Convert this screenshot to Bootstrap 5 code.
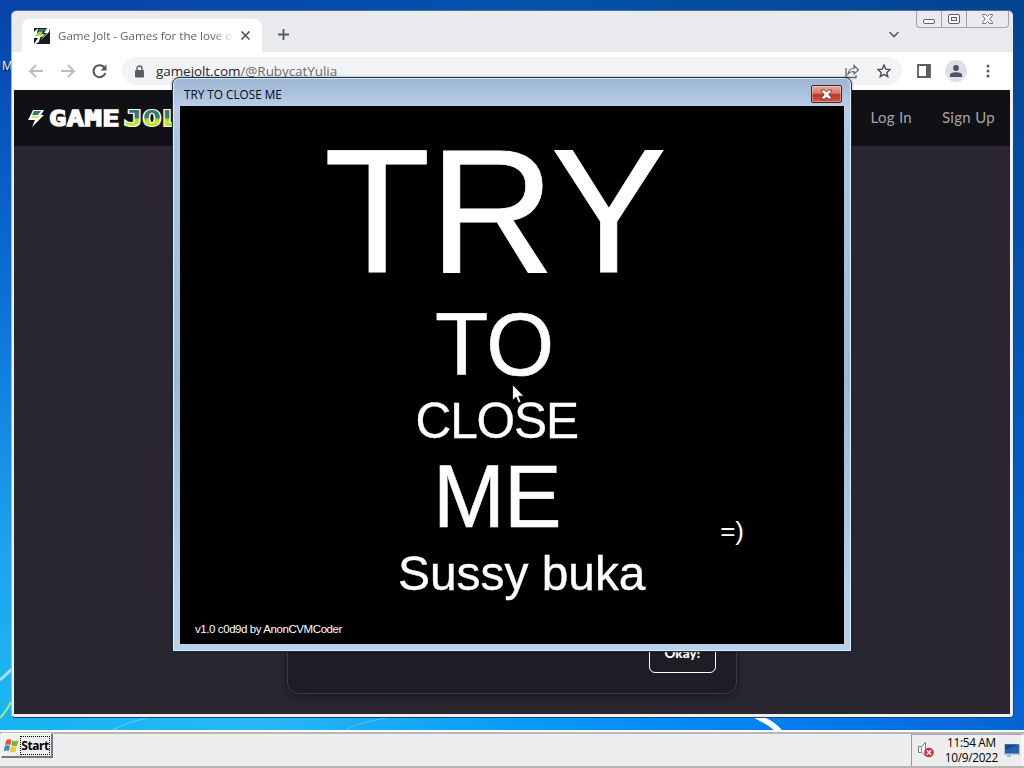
<!DOCTYPE html>
<html lang="en">
<head>
  <meta charset="UTF-8">
  <title>Desktop</title>
  <link href="https://cdn.jsdelivr.net/npm/bootstrap@5.3.0/dist/css/bootstrap.min.css" rel="stylesheet">
  <style>
    html, body {
      height: 100%;
      overflow: hidden;
      font-family: "Open Sans", "Noto Sans", sans-serif;
      font-size: 12px;
      line-height: 1;
    }

    svg {
      display: block;
      flex: none;
    }

    .desktop {
      width: 1024px;
      height: 768px;
      background: #0554b4;
    }

    .wallpaper {
      position: absolute;
      inset: 0;
    }

    .desk-icon {
      position: absolute;
      left: 2px;
      top: 60px;
      font-size: 12px;
      color: #fff;
      text-shadow: 1px 1px 1px #000;
    }

    /* Browser window */
    .browser {
      position: absolute;
      left: 11px;
      top: 10px;
      width: 1003px;
      height: 708px;
      padding: 0 3px 3px 2px;
      background: #f0f0f2;
      border: 1px solid #1d456b;
      border-top-color: #56708f;
      border-left-color: #9fb4cc;
      border-radius: 6px 6px 4px 4px;
      overflow: hidden;
    }

    .tab-strip {
      height: 41px;
      margin: 0 -3px 0 -2px;
      background: #e8eaed;
      padding-left: 10px;
    }

    .tab-item {
      width: 240px;
      height: 33px;
      margin-top: 8px;
      background: #fff;
      border-radius: 8px 8px 0 0;
      padding: 0 11px 0 11px;
    }

    .tab-title {
      width: 176px;
      margin-left: 8px;
      line-height: 16px;
      font-size: 11.6px;
      color: #5f6368;
      -webkit-mask-image: linear-gradient(90deg, #000 155px, transparent 176px);
    }

    .win-buttons {
      width: 93px;
      height: 17px;
      margin-right: 4px;
      border: 1px solid #a3a5a9;
      border-top: 0;
      border-radius: 0 0 4px 4px;
    }

    .win-buttons span + span {
      border-left: 1px solid #a3a5a9;
    }

    .toolbar {
      height: 38px;
      margin: 0 -3px 0 -2px;
      padding: 0 0 0 15px;
      background: #fff;
    }

    .omnibox {
      flex: none;
      width: 780px;
      height: 28px;
      margin-left: 14px;
      border-radius: 14px;
      background: #f1f3f4;
      padding: 0 11px 0 13px;
    }

    .url-text {
      margin-left: 12px;
      font-size: 13.5px;
      letter-spacing: -.07px;
      line-height: 18px;
      color: #26282c;
    }

    .url-text span {
      color: #696c70;
    }

    .avatar-dot {
      width: 22px;
      height: 22px;
      margin-left: 14px;
      background: #dbdfe6;
    }

    /* Page */
    .site {
      height: 624px;
      background: #2a2730;
    }

    .site-nav {
      height: 56px;
      padding: 0 15px 0 13px;
      background: #111015;
      font-family: Lato, sans-serif;
      font-size: 15px;
      letter-spacing: .3px;
      color: #a5a4a9;
    }

    .consent {
      width: 450px;
      height: 120px;
      margin: 428px 0 0 273px;
      padding: 0 20px 20px;
      background: #1e1c24;
      border: 1px solid #3d3a43;
      border-radius: 12px;
      box-shadow: 0 3px 12px rgba(0, 0, 0, .4);
    }

    .okay-btn {
      width: 67px;
      height: 37px;
      padding: 0 0 4px;
      border: 1px solid #fff;
      border-radius: 6px;
      color: #fff;
      font: 900 13.5px/32px Lato, sans-serif;
    }

    /* Dialog */
    .dialog-win {
      position: absolute;
      left: 172px;
      top: 77px;
      width: 680px;
      height: 575px;
      padding: 0 7px 7px;
      background: linear-gradient(#9cb5d1, #b9cee8 29px, #adc6e0 60px, #a9c5e2 100px, #9bbad8 300px, #bad0ea 540px);
      border: 1px solid #16313d;
      border-radius: 7px 7px 0 0;
      box-shadow: inset 0 0 0 1px #d9ecfa, 0 0 3px rgba(0, 0, 0, .35);
    }

    .dialog-title {
      height: 28px;
      padding: 4px 2px 0 4px;
      font-size: 11.75px;
      color: #000a18;
    }

    .close-btn {
      width: 31px;
      height: 18px;
      border: 1px solid #571d1e;
      border-radius: 2px;
      background: linear-gradient(#e6aaa0, #d9776a 46%, #bd3423 50%, #cf5a45);
      box-shadow: inset 0 0 0 1px rgba(255, 255, 255, .35);
    }

    .dialog-body {
      height: 538px;
      background: #000;
      color: #fff;
      font-family: "Liberation Sans", Arial, sans-serif;
      white-space: nowrap;
    }

    /* Each label is set slightly condensed */
    .dialog-body span {
      display: inline-block;
      transform-origin: 0 0;
    }

    .word-try { font-size: 177px; height: 193px; line-height: 210px; padding-left: 144px; letter-spacing: -1px; -webkit-text-stroke: .8px #fff; }
    .word-try span { transform: scaleX(.983); }
    .word-to { font-size: 89px; height: 98px; line-height: 90px; padding-left: 255px; letter-spacing: -.5px; -webkit-text-stroke: .6px #fff; }
    .word-to span { transform: scaleX(.98); }
    .word-close { font-size: 49.5px; height: 62px; line-height: 48px; padding-left: 235.5px; letter-spacing: -1.1px; -webkit-text-stroke: .4px #fff; }
    .word-me { font-size: 89px; height: 90px; line-height: 74px; padding: 0 100px 0 253px; letter-spacing: -1px; -webkit-text-stroke: .6px #fff; }
    .word-me span { transform: scaleX(.97); }
    .word-sussy { font-size: 49px; height: 74px; line-height: 48px; padding-left: 217.5px; -webkit-text-stroke: .4px #fff; }
    .word-sussy span { transform: scaleX(.977); }

    .smile {
      margin: 0 0 5px auto;
      font-size: 26px;
      line-height: 26px;
      letter-spacing: 0;
      -webkit-text-stroke: 0;
    }

    .credit {
      padding-left: 15px;
      font-size: 11.5px;
      letter-spacing: -.42px;
      line-height: 12px;
    }

    .pointer {
      position: absolute;
      left: 512px;
      top: 384px;
    }

    /* Taskbar */
    .taskbar {
      position: absolute;
      left: 0;
      right: 0;
      bottom: 0;
      height: 38px;
      background: #efeeee;
      border-top: 2px solid #fff;
      border-bottom: 2px solid #b5b5b5;
      box-shadow: inset 0 2px 0 #b6b7ba;
    }

    .start-btn {
      width: 52px;
      height: 25px;
      margin: 1px 0 0 1px;
      padding-left: 2px;
      border: 1px solid #fff;
      border-right: 2px solid #777;
      border-bottom: 2px solid #777;
      background: #f0f0f0;
    }

    .start-label {
      width: 30px;
      height: 19px;
      margin-left: 1px;
      border: 1px dotted #000;
      font-size: 12px;
      line-height: 17px;
      letter-spacing: -.45px;
      font-weight: 700;
      color: #000;
    }

    .tray {
      width: 112px;
      margin: 2px 1px 0 0;
      border-left: 1px solid #9b9b9b;
      border-top: 1px solid #a9a9a9;
      border-right: 1px solid #fff;
      padding: 0 2px 2px 5px;
      color: #000;
    }

    .clock {
      line-height: 15px;
      font-size: 11.8px;
      letter-spacing: -.3px;
    }
  </style>
</head>
<body>
  <div class="desktop position-relative overflow-hidden">
    <svg class="wallpaper" width="1024" height="768" viewBox="0 0 1024 768">
      <defs>
        <linearGradient id="skyTop" x1="0" x2="1" y1="0" y2="0">
          <stop offset="0" stop-color="#0742a8"/><stop offset=".5" stop-color="#0552ac"/><stop offset="1" stop-color="#034390"/>
        </linearGradient>
        <linearGradient id="skyLeft" x1="0" x2="0" y1="0" y2="1">
          <stop offset="0" stop-color="#0742a8"/><stop offset=".4" stop-color="#0b6fd8"/><stop offset=".75" stop-color="#1ea2ee"/><stop offset="1" stop-color="#1db9f3"/>
        </linearGradient>
        <linearGradient id="skyRight" x1="0" x2="0" y1="0" y2="1">
          <stop offset="0" stop-color="#034390"/><stop offset=".5" stop-color="#0357b7"/><stop offset="1" stop-color="#0566d5"/>
        </linearGradient>
        <linearGradient id="skyBottom" x1="0" x2="1" y1="0" y2="0">
          <stop offset="0" stop-color="#16b2f2"/><stop offset=".25" stop-color="#28b8f6"/><stop offset=".5" stop-color="#0a9bf8"/><stop offset=".75" stop-color="#0380f2"/><stop offset="1" stop-color="#0563d2"/>
        </linearGradient>
      </defs>
      <rect width="1024" height="20" fill="url(#skyTop)"/>
      <rect width="20" height="730" fill="url(#skyLeft)"/>
      <rect x="1004" width="20" height="730" fill="url(#skyRight)"/>
      <rect y="710" width="1024" height="20" fill="url(#skyBottom)"/>
      <path d="M0 680L12 669" stroke="#a8e1fa" stroke-width="3"/>
      <path d="M0 718Q6 712 11 702" fill="none" stroke="#a5e58c" stroke-width="2"/>
      <path d="M112 730Q130 721 150 717" fill="none" stroke="#62cdfb"/>
      <path d="M345 730Q366 720 394 717" fill="none" stroke="#4fc0ff"/>
      <path d="M752 717H764Q775 722 782 730H774Q765 723 752 717" fill="#fff"/>
    </svg>
    <div class="desk-icon">M</div>

    <!-- Browser -->
    <div class="browser">
      <div class="tab-strip d-flex">
        <div class="tab-item d-flex align-items-center">
          <svg width="17" height="17" viewBox="0 0 17 17">
            <path fill="#111b20" d="M1 1H17V17H1z"/>
            <path fill="#a9dc50" d="M4 7H12L10 10H3z"/>
            <path fill="#fff" d="M1 5L5 1 4 7 3 9H8L5 16 14 6H11L14 1H17L16 5 9 12 3 17H1L5 11H1z"/>
            <path fill="#2f7f6f" d="M6 2H13L10 5H5z"/>
            <path fill="#8fca4e" d="M5 5H10L9 7H4z"/>
          </svg>
          <div class="tab-title text-nowrap overflow-hidden">Game Jolt - Games for the love o</div>
          <svg style="margin-left: 6px" width="11" height="11" viewBox="0 0 11 11"><path d="M1.500 1.500L9.500 9.500M9.500 1.500L1.500 9.500" stroke="#4b4e52" stroke-width="1.6"/></svg>
        </div>
        <svg class="align-self-center mt-2" style="margin-left: 15px" width="13" height="13" viewBox="0 0 13 13"><path d="M6.500 1V12M1 6.500H12" stroke="#55585c" stroke-width="1.8"/></svg>
        <svg class="ms-auto align-self-center mt-2" style="margin-right: 16px" width="12" height="9" viewBox="0 0 12 9"><path d="M1.500 2L6 6.500 10.500 2" fill="none" stroke="#5c5f63" stroke-width="1.7"/></svg>
        <div class="win-buttons d-flex">
          <span class="d-flex flex-fill align-items-center justify-content-center">
            <svg width="14" height="12" viewBox="0 0 14 12"><rect x="1.500" y="6.500" width="11" height="4" rx="1.500" fill="#fff" stroke="#5e5f67"/></svg>
          </span>
          <span class="d-flex flex-fill align-items-center justify-content-center">
            <svg width="14" height="12" viewBox="0 0 14 12"><rect x="1.500" y="1.500" width="11" height="9" rx="1.500" fill="#fff" stroke="#5e5f67"/><rect x="4.500" y="4.500" width="5" height="3" fill="#eee" stroke="#5e5f67"/></svg>
          </span>
          <span class="d-flex align-items-center justify-content-center" style="width: 42px">
            <svg width="14" height="12" viewBox="0 0 14 12"><path d="M1.500 1.500H4.500L6.500 3.500 8.500 1.500H11.500V2.500L8.800 6 11.500 9.500V10.500H8.500L6.500 8.500 4.500 10.500H1.500V9.500L4.200 6 1.500 2.500z" fill="#fff" stroke="#6c6d74"/></svg>
          </span>
        </div>
      </div>
      <div class="toolbar d-flex align-items-center">
        <svg width="18" height="16" viewBox="0 0 18 16"><path d="M16 8H3M9 2L3 8 9 14" fill="none" stroke="#b9bbbd" stroke-width="1.800"/></svg>
        <svg style="margin-left: 14px" width="18" height="16" viewBox="0 0 18 16"><path d="M2 8H15M9 2L15 8 9 14" fill="none" stroke="#b9bbbd" stroke-width="1.800"/></svg>
        <svg style="margin-left: 14px" width="17" height="17" viewBox="0 0 17 17"><path d="M13.800 5.200A6 6 0 1 0 14.300 10" fill="none" stroke="#515458" stroke-width="2"/><path d="M15.500 1.500V7.500H9.500z" fill="#515458"/></svg>
        <div class="omnibox d-flex align-items-center">
          <svg width="9" height="13" viewBox="0 0 9 13"><rect y="5" width="9" height="7.500" rx="1" fill="#5a5d62"/><path d="M2 5.500V3.500A2.500 2.500 0 0 1 7 3.500V5.500" fill="none" stroke="#5a5d62" stroke-width="1.400"/></svg>
          <div class="url-text">gamejolt.com<span>/@RubycatYulia</span></div>
          <svg class="ms-auto" width="16" height="15" viewBox="0 0 16 15"><path d="M2 4V13.500H12V11" fill="none" stroke="#65686c" stroke-width="1.300"/><path d="M4 10C4.500 6 7 4.500 10 4.500V1.500L14.500 6 10 10V7.500C7.500 7.500 5.500 8 4 10z" fill="none" stroke="#65686c" stroke-width="1.200"/></svg>
          <svg style="margin-left: 17px" width="14" height="14" viewBox="0 0 16 16"><path d="M8 1.200L10 5.800 15 6.300 11.200 9.600 12.300 14.500 8 11.900 3.700 14.500 4.800 9.600 1 6.300 6 5.800z" fill="none" stroke="#4c4f53" stroke-width="1.600"/></svg>
        </div>
        <svg style="margin-left: 15px" width="14" height="14" viewBox="0 0 14 14"><path d="M1 1H13V13H1z" fill="none" stroke="#5a5d62" stroke-width="1.800"/><path d="M9 1H13V13H9z" fill="#5a5d62"/></svg>
        <div class="avatar-dot rounded-circle d-flex align-items-center justify-content-center">
          <svg width="12" height="12" viewBox="0 0 12 12"><circle cx="6" cy="3" r="2.900" fill="#4c5361"/><path d="M0 12V10Q0 7.200 6 7.200T12 10V12z" fill="#4c5361"/></svg>
        </div>
        <svg style="margin-left: 19px" width="4" height="14" viewBox="0 0 4 14"><g fill="#55585c"><circle cx="2" cy="2" r="1.500"/><circle cx="2" cy="7" r="1.500"/><circle cx="2" cy="12" r="1.500"/></g></svg>
      </div>

      <div class="site">
        <div class="site-nav d-flex align-items-center">
          <svg width="180" height="20" viewBox="0 0 180 20">
            <defs>
              <linearGradient id="jolt" x1="0" x2="0" y1="0" y2="1">
                <stop offset="0" stop-color="#29786e"/><stop offset=".45" stop-color="#2f7f6f"/><stop offset=".55" stop-color="#a8df3f"/><stop offset="1" stop-color="#ccff00"/>
              </linearGradient>
            </defs>
            <path d="M6 2H17L14 7H17L5 19 8 12H1z" fill="#fff"/>
            <path d="M7 3H14L11 7H5z" fill="#2f7f6f"/><path d="M5 8H13L10 10H4z" fill="#c5ef5d"/>
            <g font-family="DejaVu Sans Mono, monospace" font-weight="bold" font-size="20.500">
              <text x="22" y="17.500" textLength="71" lengthAdjust="spacingAndGlyphs" fill="#fff" stroke="#fff" stroke-width="1.300">GAME</text>
              <text x="97" y="17.500" textLength="75" lengthAdjust="spacingAndGlyphs" fill="url(#jolt)" stroke="#fff" stroke-width="2" paint-order="stroke">JOLT</text>
            </g>
          </svg>
          <div class="ms-auto" style="padding-bottom: 2px">Log In</div>
          <div style="padding-bottom: 2px; margin-left: 30px">Sign Up</div>
        </div>
        <div class="consent d-flex justify-content-end align-items-end">
          <button type="button" class="btn okay-btn">Okay!</button>
        </div>
      </div>
    </div>

    <!-- Dialog -->
    <div class="dialog-win">
      <div class="dialog-title d-flex align-items-center justify-content-between">
        <div style="padding-top: 2px">TRY TO CLOSE ME</div>
        <div class="close-btn d-flex align-items-center justify-content-center">
          <svg width="13" height="11" viewBox="0 0 13 11"><path d="M1.500 1H4.500L6.500 3 8.500 1H11.500V2.200L8.800 5.500 11.500 8.800V10H8.500L6.500 8 4.500 10H1.500V8.800L4.200 5.500 1.500 2.200z" fill="#fff" stroke="#5c3a40" stroke-width=".9"/></svg>
        </div>
      </div>
      <div class="dialog-body d-flex flex-column overflow-hidden">
        <div class="word-try"><span>TRY</span></div>
        <div class="word-to"><span>TO</span></div>
        <div class="word-close">CLOSE</div>
        <div class="word-me d-flex align-items-start">
          <span>ME</span>
          <div class="smile align-self-end">=)</div>
        </div>
        <div class="word-sussy"><span>Sussy buka</span></div>
        <div class="credit">v1.0 c0d9d by AnonCVMCoder</div>
      </div>
    </div>

    <svg class="pointer" width="12" height="20" viewBox="0 0 12 20"><path d="M.5.500V16.500L4 13 6.500 19 9 18 6.700 12.200H11.800z" fill="#fff" stroke="#000" stroke-width=".8"/></svg>

    <!-- Taskbar -->
    <div class="taskbar d-flex justify-content-between">
      <div class="start-btn d-flex align-items-center">
        <svg width="15" height="15" viewBox="0 0 15 15">
          <path d="M2.500 2Q5 .5 7.500 2L6.300 7Q4 5.800 1 7z" fill="#e3552a"/>
          <path d="M8.500 2.500Q11 4 14.500 2.500L13 7.800Q10 9 7.300 7.500z" fill="#76b82e"/>
          <path d="M.8 8Q3.500 6.700 6 8L4.800 13Q2.500 11.800-.3 13z" fill="#3c87cf"/>
          <path d="M7 8.500Q9.500 10 12.800 8.800L11.500 13.500Q8.500 15 5.800 13.500z" fill="#f5c52c"/>
        </svg>
        <div class="start-label text-center">Start</div>
      </div>
      <div class="tray d-flex align-items-center">
        <svg width="18" height="17" viewBox="0 0 18 17">
          <path d="M1.500 5.500H4.500L8.500 1.500V15L4.500 11.500H1.500z" fill="#f4f4f4" stroke="#7d7d7d"/><path d="M4.500 5.500V11.500" stroke="#999"/>
          <circle cx="12" cy="11.500" r="4.800" fill="#d62f3e"/><path d="M9.800 9.300L14.200 13.700M14.200 9.300L9.800 13.700" stroke="#fff" stroke-width="1.400"/>
        </svg>
        <div class="clock text-center ms-auto text-nowrap">11:54 AM<br>10/9/2022</div>
        <svg style="margin-left: 6px" width="16" height="14" viewBox="0 0 16 14"><path d="M0 1H16V12H0z" fill="#b9c7d6"/><path d="M1 1.500H15V10.500H1z" fill="#2460b4"/><path d="M1 1.500H15L1 7z" fill="#1b448c"/><path d="M3 13H7" stroke="#777"/></svg>
      </div>
    </div>
  </div>
  <script src="https://cdn.jsdelivr.net/npm/bootstrap@5.3.0/dist/js/bootstrap.bundle.min.js"></script>
</body>
</html>
